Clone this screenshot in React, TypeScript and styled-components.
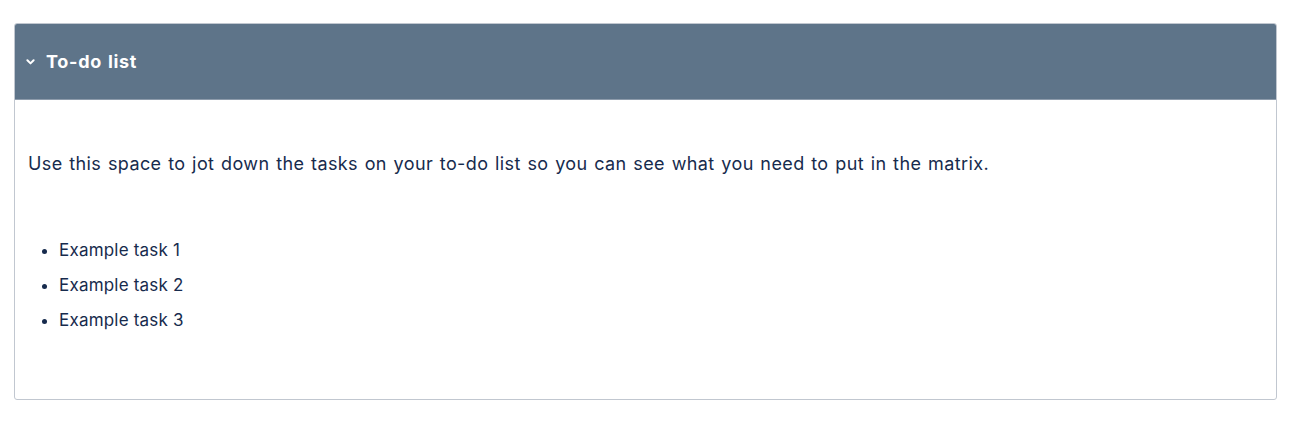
import styled, { createGlobalStyle } from "styled-components";

const GlobalStyle = createGlobalStyle`
  body {
    margin: 0;
    background: #ffffff;
    font-family: "Inter", "Noto Sans", sans-serif;
    color: #172b4d;
  }
`;

const tasks = ["Example task 1", "Example task 2", "Example task 3"];

function Chevron() {
  return (
    <svg width="9" height="6" viewBox="0 0 9 6" aria-hidden>
      <path
        d="M1.4 1.3 L4.5 4.4 L7.6 1.3"
        fill="none"
        stroke="#ffffff"
        strokeWidth="2"
        strokeLinecap="round"
        strokeLinejoin="round"
      />
    </svg>
  );
}

export default function App() {
  return (
    <>
      <GlobalStyle />
      <Page>
        <Panel>
          <Header>
            <Chevron />
            <Title>To-do list</Title>
          </Header>
          <Body>
            <Intro>
              Use this space to jot down the tasks on your to-do list so you can
              see what you need to put in the matrix.
            </Intro>
            <TaskList>
              {tasks.map((t) => (
                <Task key={t}>{t}</Task>
              ))}
            </TaskList>
          </Body>
        </Panel>
      </Page>
    </>
  );
}

const Page = styled.div`
  padding: 23px 19px 0 14px;
`;

const Panel = styled.section`
  border: 1px solid #c1c7d0;
  border-radius: 3px;
  overflow: hidden;
`;

const Header = styled.div`
  display: flex;
  align-items: center;
  gap: 11px;
  height: 75px;
  padding: 0 11px;
  background: #5e7489;
  border-bottom: 1px solid #8d9bab;
`;

const Title = styled.span`
  color: #ffffff;
  font-size: 18px;
  font-weight: 700;
  letter-spacing: 0.7px;
  word-spacing: 1px;
`;

const Body = styled.div`
  padding: 50px 13px 65px;
`;

const Intro = styled.p`
  margin: 0 0 58px;
  font-size: 18px;
  line-height: 28px;
  letter-spacing: 0.4px;
  word-spacing: 1.2px;
`;

const TaskList = styled.ul`
  margin: 0;
  padding-left: 31px;
  font-size: 17px;
  line-height: 28px;
  letter-spacing: 0.2px;
`;

const Task = styled.li`
  & + & {
    margin-top: 7px;
  }
`;
